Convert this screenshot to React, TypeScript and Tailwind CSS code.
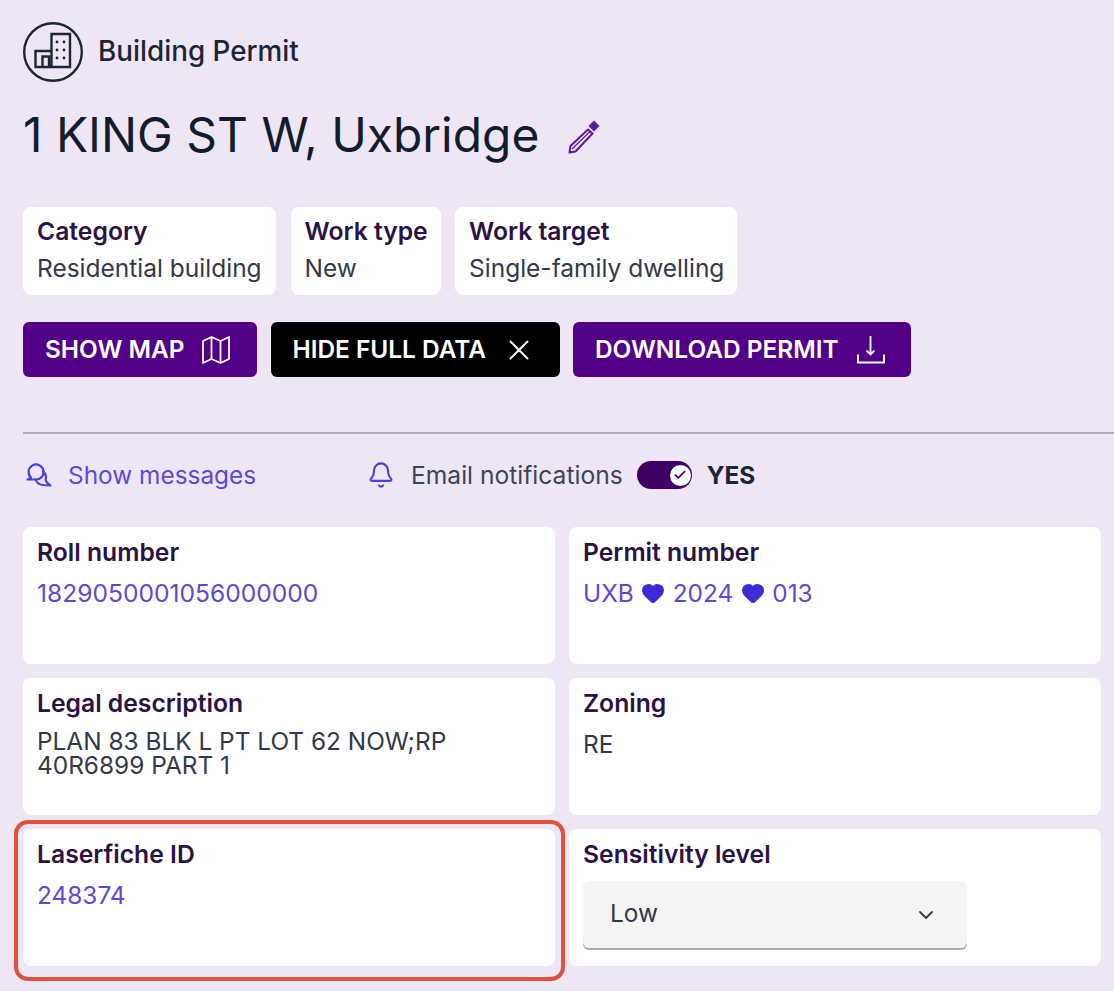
import React from 'react';
import { X, Bell, ChevronDown, Check, Heart } from 'lucide-react';

const font = "font-['Inter','Noto_Sans',sans-serif]";

const chips = [
  { label: 'Category', value: 'Residential building', width: 'w-[253px]' },
  { label: 'Work type', value: 'New', width: 'w-[150px]' },
  { label: 'Work target', value: 'Single-family dwelling', width: 'w-[282px]' },
];

const Card: React.FC<{ label: string; children: React.ReactNode; className?: string }> = ({ label, children, className }) => (
  <div className={`relative h-[137px] rounded-lg bg-white px-[14px] pt-[10px] ${className ?? ''}`}>
    <p className="text-[24.7px] leading-[30px] font-semibold text-[#2a1245]">{label}</p>
    {children}
  </div>
);

const BuildingIcon = () => (
  <svg width="62" height="62" viewBox="0 0 62 62" fill="none" stroke="#1c2536" strokeWidth="2.4" className="shrink-0">
    <circle cx="31" cy="31" r="28.8" />
    <path d="M13.5 46V30H29.5V46H13.5ZM29.5 30V13H48V46H29.5M20.5 46V35.5H27V46" />
    <g fill="#1c2536" stroke="none">
      <circle cx="35" cy="21" r="1.4" /><circle cx="42" cy="21" r="1.4" />
      <circle cx="35" cy="29" r="1.4" /><circle cx="42" cy="29" r="1.4" />
      <circle cx="35" cy="37" r="1.4" /><circle cx="42" cy="37" r="1.4" />
    </g>
  </svg>
);

const PencilIcon = () => (
  <svg width="34" height="34" viewBox="0 0 34 34" fill="none" stroke="#5b1a9a" strokeWidth="2" className="mt-[3px] shrink-0">
    <path d="M1.5 32.5L2.5 26L20 9.5L24.5 13.5L7.5 31.5L1.5 32.5Z" strokeLinejoin="round" />
    <path d="M4 29L22 11.5" strokeWidth="1.2" />
    <path d="M26 0.5L31.5 6L26 11.5L20.5 6Z" fill="#5b1a9a" stroke="none" />
  </svg>
);

const MessagesIcon = () => (
  <svg width="26" height="26" viewBox="0 0 26 26" fill="none" stroke="#4a3fe0" strokeWidth="2.2" strokeLinecap="round" strokeLinejoin="round" className="shrink-0">
    <path d="M5 15.5A7.5 7.5 0 1 1 10 17.5C7.5 17.5 4 17.5 1.5 17.5C3 17 4.2 16.5 5 15.5Z" />
    <path d="M17 9.5C20 11.5 20.5 16 19.5 18C20.5 20.5 22.5 22.5 24.5 23.5C20 23.5 15 23.5 12.5 21.5C11 20.5 10 19 9.5 17.5" />
  </svg>
);

const MapIcon = () => (
  <svg width="28" height="28" viewBox="0 0 28 28" fill="none" stroke="currentColor" strokeWidth="1.8" strokeLinejoin="round" className="shrink-0">
    <path d="M1 5L9.5 1L18.5 5L27 1V23L18.5 27L9.5 23L1 27V5Z" />
    <path d="M9.5 1V23M18.5 5V27" />
  </svg>
);

const DownloadIcon = () => (
  <svg width="28" height="28" viewBox="0 0 28 28" fill="none" stroke="currentColor" strokeWidth="2" className="shrink-0">
    <path d="M13.5 0V18M9.5 14.5L13.5 18.5L17.5 14.5" strokeWidth="1.8" />
    <path d="M1 18.5V26.5H27V18.5" />
  </svg>
);

export default function App() {
  return (
    <div className={`${font} h-[991px] w-[1114px] overflow-hidden bg-[#eee6f5] pt-[21px] text-[#1c2536]`}>
      <div className="flex items-center gap-[14px] pl-[22px]">
        <BuildingIcon />
        <span className="text-[27.8px] font-medium">Building Permit</span>
      </div>

      <div className="mt-[24px] flex items-center gap-[29px] pl-[23px]">
        <h1 className="text-[47.9px] leading-[56px] font-normal text-[#111c2e]">1 KING ST W, Uxbridge</h1>
        <PencilIcon />
      </div>

      {/* Chips */}
      <div className="mt-[44px] flex gap-[14.5px] pl-[23px]">
        {chips.map((c) => (
          <div key={c.label} className={`h-[88px] rounded-lg bg-white pt-[9px] pl-[14px] whitespace-nowrap ${c.width}`}>
            <p className="text-[24.7px] leading-[30px] font-semibold text-[#2a1245]">{c.label}</p>
            <p className="mt-[7px] text-[24.5px] leading-[30px] text-[#33394a]">{c.value}</p>
          </div>
        ))}
      </div>

      {/* Buttons */}
      <div className="mt-[27px] flex gap-[13.5px] pl-[23px] text-[24.4px] font-semibold text-white">
        <button className="flex h-[55px] w-[234px] items-center gap-[18px] rounded-md bg-[#520088] pl-[22px]">
          SHOW MAP <MapIcon />
        </button>
        <button className="flex h-[55px] w-[289px] items-center gap-[20px] rounded-md bg-black pl-[22px]">
          HIDE FULL DATA <X size={34} strokeWidth={1.4} className="-mx-[4px]" />
        </button>
        <button className="flex h-[55px] w-[338px] items-center gap-[18px] rounded-md bg-[#520088] pl-[22px]">
          DOWNLOAD PERMIT <DownloadIcon />
        </button>
      </div>

      <div className="mt-[55px] ml-[23px] h-[2px] bg-[#b2adb8]" />

      {/* Messages / notifications */}
      <div className="mt-[23px] flex h-[36px] items-center pl-[26px] text-[24.4px]">
        <MessagesIcon />
        <span className="ml-[16px] w-[300px] text-[#5b4ad6]">Show messages</span>
        <Bell size={28} strokeWidth={1.8} className="-ml-px text-[#4a3fe0]" />
        <span className="ml-[16px] text-[24.6px] text-[#3d4456]">Email notifications</span>
        <span className="ml-[14px] flex h-[28px] w-[55px] items-center justify-end rounded-full bg-[#3f0066] pr-[1px]">
          <span className="flex h-[21px] w-[21px] items-center justify-center rounded-full bg-white">
            <Check size={14} strokeWidth={3} className="text-[#3f0066]" />
          </span>
        </span>
        <span className="ml-[15px] font-bold text-[#1c2536]">YES</span>
      </div>

      {/* Data cards */}
      <div className="mt-[34px] grid grid-cols-[532px_532px] gap-[14px] pl-[23px]">
        <Card label="Roll number">
          <p className="mt-[11px] text-[24.6px] leading-[30px] text-[#5b4ad6]">1829050001056000000</p>
        </Card>
        <Card label="Permit number">
          <p className="mt-[11px] flex items-center gap-[7.5px] text-[24.4px] leading-[30px] text-[#5b4ad6]">
            UXB <Heart size={24} fill="#3a2bd6" stroke="#3a2bd6" /> 2024 <Heart size={24} fill="#3a2bd6" stroke="#3a2bd6" /> 013
          </p>
        </Card>
        <Card label="Legal description">
          <p className="mt-[11px] text-[24.4px] leading-[24px] text-[#33394a]">PLAN 83 BLK L PT LOT 62 NOW;RP 40R6899 PART 1</p>
        </Card>
        <Card label="Zoning">
          <p className="mt-[11px] text-[24.4px] leading-[30px] text-[#33394a]">RE</p>
        </Card>
        <Card label="Laserfiche ID">
          <p className="mt-[11px] text-[24.4px] leading-[30px] text-[#5b4ad6]">248374</p>
          {/* annotation drawn over the card */}
          <div className="absolute -top-[9px] -right-[10px] -bottom-[15px] -left-[9px] rounded-[14px] border-4 border-[#e2503c]" />
        </Card>
        <Card label="Sensitivity level">
          <div className="mt-[12px] flex h-[67px] w-[384px] items-center justify-between rounded-md bg-[#f4f4f4] pr-[29px] pb-[3px] pl-[27px] text-[24.4px] text-[#33394a] shadow-[0_2px_0_#a8adb0]">
            Low <ChevronDown size={24} strokeWidth={1.8} className="mt-[3px]" />
          </div>
        </Card>
      </div>
    </div>
  );
}
